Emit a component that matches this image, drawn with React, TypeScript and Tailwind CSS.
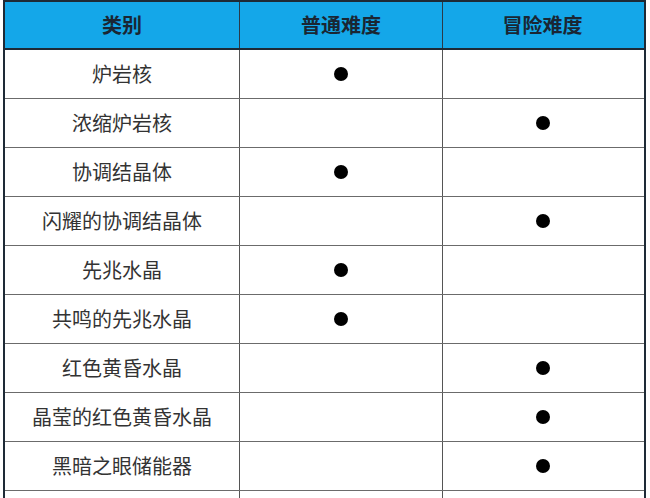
// Material difficulty table
// Header in blue, rows with a dot marking the difficulty

type Level = 'normal' | 'adventure' | null

interface Row {
  name: string
  level: Level
}

const rows: Row[] = [
  { name: '炉岩核', level: 'normal' },
  { name: '浓缩炉岩核', level: 'adventure' },
  { name: '协调结晶体', level: 'normal' },
  { name: '闪耀的协调结晶体', level: 'adventure' },
  { name: '先兆水晶', level: 'normal' },
  { name: '共鸣的先兆水晶', level: 'normal' },
  { name: '红色黄昏水晶', level: 'adventure' },
  { name: '晶莹的红色黄昏水晶', level: 'adventure' },
  { name: '黑暗之眼储能器', level: 'adventure' },
  { name: '', level: null },
]

const font = { fontFamily: '"Noto Sans CJK SC", "Liberation Sans", sans-serif' }

function Dot() {
  return <span className="block w-[14px] h-[14px] rounded-full bg-black" />
}

export default function App() {
  return (
    <div className="w-[650px] h-[498px] overflow-hidden bg-white" style={font}>
      <div className="ml-[3px] w-[643px] border-2 border-[#1e2a36]">
        {/* Header */}
        <div className="grid grid-cols-[235px_203px_199px] h-[48px] bg-[#14a7e9] border-b-2 border-[#1e2a36] text-[20px] font-bold text-[#1a2633]">
          <div className="flex items-center justify-center border-r border-[#2b3a48]">类别</div>
          <div className="flex items-center justify-center border-r border-[#2b3a48]">普通难度</div>
          <div className="flex items-center justify-center">冒险难度</div>
        </div>

        {/* Body */}
        {rows.map((row, i) => (
          <div
            key={i}
            className="grid grid-cols-[235px_203px_199px] h-[49px] border-b border-[#6b6b6b] text-[20px] text-[#333333]"
          >
            <div className="flex items-center justify-center border-r border-[#555555]">{row.name}</div>
            <div className="flex items-center justify-center border-r border-[#555555]">
              {row.level === 'normal' && <Dot />}
            </div>
            <div className="flex items-center justify-center">
              {row.level === 'adventure' && <Dot />}
            </div>
          </div>
        ))}
      </div>
    </div>
  )
}
